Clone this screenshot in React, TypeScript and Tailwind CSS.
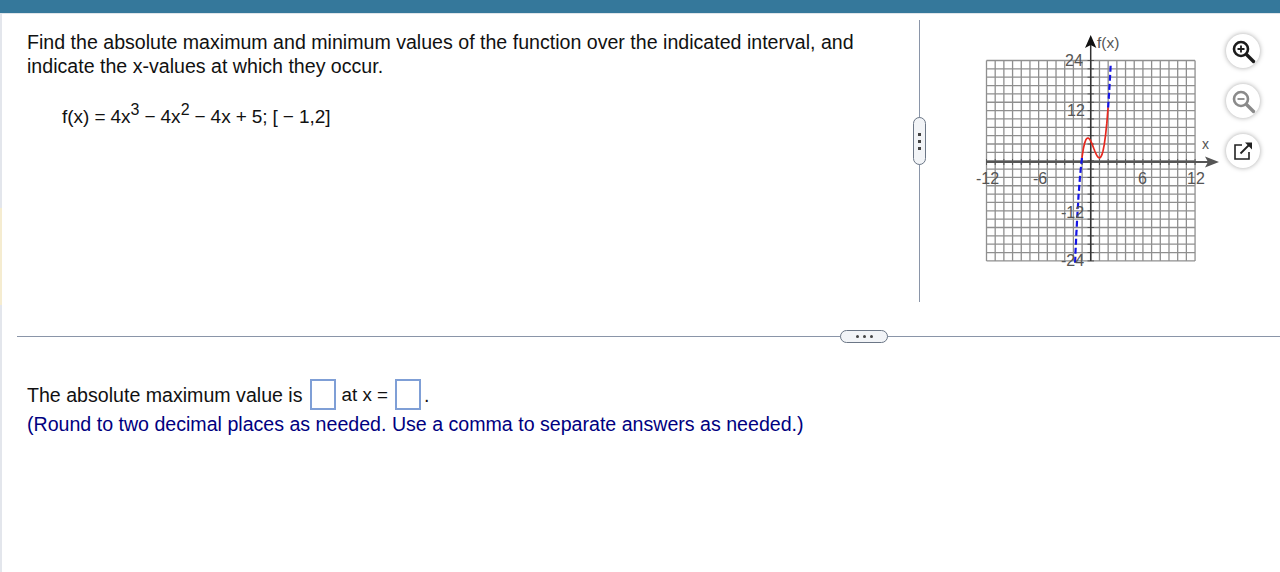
const xs = Array.from({ length: 25 }, (_, i) => i);
const ys = Array.from({ length: 25 }, (_, i) => i);

// graph coordinates, page offset is 970,30
const px = (x: number) => 120.7 + x * 8.69;
const py = (y: number) => 132 - y * 4.18;
const f = (x: number) => 4 * x ** 3 - 4 * x ** 2 - 4 * x + 5;

function curve(from: number, to: number) {
  const pts: string[] = [];
  for (let i = 0; i <= 60; i++) {
    const x = from + ((to - from) * i) / 60;
    pts.push(`${px(x).toFixed(1)},${py(f(x)).toFixed(1)}`);
  }
  return pts.join(' ');
}

function Graph() {
  return (
    <svg width="250" height="250" viewBox="0 0 250 250" className="block">
      {xs.map((i) => (
        <line key={i} x1={16.5 + i * 8.69} y1="30.5" x2={16.5 + i * 8.69} y2="231" stroke="#8f8f8f" strokeWidth="1.3" />
      ))}
      {ys.map((i) => (
        <line key={i} x1="16.5" y1={30.5 + i * 8.35} x2="225" y2={30.5 + i * 8.35} stroke="#8f8f8f" strokeWidth="1.3" />
      ))}
      {xs.map((i) => (
        <line key={i} x1={16.5 + i * 8.69} y1="129" x2={16.5 + i * 8.69} y2="135" stroke="#555" strokeWidth="1" />
      ))}
      {ys.map((i) => (
        <line key={i} x1="117.5" y1={30.5 + i * 8.35} x2="124" y2={30.5 + i * 8.35} stroke="#555" strokeWidth="1" />
      ))}
      <line x1="16.5" y1="132" x2="240" y2="132" stroke="#555" strokeWidth="1.8" />
      <line x1="120.7" y1="231" x2="120.7" y2="14" stroke="#333" strokeWidth="1.5" />
      <polygon points="120.7,5 115,18 120.7,15 126.4,18" fill="#111" />
      <polygon points="249,132 235,126.5 238,132 235,137.5" fill="#555" />
      <polyline points={curve(-1.8, -1)} fill="none" stroke="#1414e6" strokeWidth="2.2" strokeDasharray="6 3" />
      <polyline points={curve(2, 2.31)} fill="none" stroke="#1414e6" strokeWidth="2.2" strokeDasharray="6 3" />
      <polyline points={curve(-1, 2)} fill="none" stroke="#e8281e" strokeWidth="1.7" />
      <g fontFamily="'Liberation Sans', Arial, sans-serif" fontSize="16" fill="#555">
        <text x="127" y="18" fontSize="15.5">f(x)</text>
        <text x="232" y="119" fontSize="14">x</text>
        <text x="95" y="36">24</text>
        <text x="97" y="86">12</text>
        <text x="91" y="188">-12</text>
        <text x="91" y="236">-24</text>
        <text x="6" y="154">-12</text>
        <text x="63" y="154">-6</text>
        <text x="168" y="154">6</text>
        <text x="217" y="154">12</text>
      </g>
    </svg>
  );
}

function ToolButton({ children }: { children: React.ReactNode }) {
  return (
    <button className="flex h-[34px] w-[34px] items-center justify-center rounded-full bg-white shadow-[0_0_5px_rgba(0,0,0,0.35)]">
      {children}
    </button>
  );
}

function AnswerBox() {
  return <span className="ml-[7px] mr-[6px] inline-block h-[31px] w-[26px] border-2 border-[#7f9fd6] bg-white" />;
}

export default function App() {
  return (
    <div
      className="h-[572px] w-[1280px] overflow-hidden bg-white text-[19.6px] text-[#111]"
      style={{ fontFamily: "'Liberation Sans', Arial, sans-serif" }}
    >
      <div className="h-[13px] bg-[#35789b]" />
      <div className="h-px bg-[#dfe5ea]" />
      <div className="flex h-[558px]">
        {/* 左侧细条 */}
        <div className="flex w-[2px] flex-col">
          <div className="h-[194px] bg-[#e3e6ec]" />
          <div className="h-[97px] bg-[#f5ecd0]" />
          <div className="flex-1 bg-[#e3e6ec]" />
        </div>
        <div className="flex-1">
          {/* 题目区 */}
          <div className="flex h-[322px]">
            <div className="w-[917px] pl-[25px] pt-[16px]">
              <p className="leading-[24px]">
                Find the absolute maximum and minimum values of the function over the indicated interval, and
                <br />
                indicate the x-values at which they occur.
              </p>
              <p className="ml-[35px] mt-[25px] flex h-[26px] items-end text-[19px] leading-[24px] [word-spacing:-0.3px]">
                <span>f(x) = 4x</span>
                <span className="relative -top-[11px] text-[16px] leading-none">3</span>
                <span className="ml-[5px]">− 4x</span>
                <span className="relative -top-[11px] text-[16px] leading-none">2</span>
                <span className="ml-[5px]">− 4x + 5; [ − 1,2]</span>
              </p>
            </div>
            <div className="relative mt-[6px] h-[282px] w-px bg-[#8a95a8]">
              <div className="absolute left-[-6px] top-[97px] flex h-[48px] w-[13px] flex-col items-center justify-center gap-[4px] rounded-full border-[1.5px] border-[#6b7686] bg-[#f2f4f7]">
                <span className="h-[3px] w-[3px] bg-[#444]" />
                <span className="h-[3px] w-[3px] bg-[#444]" />
                <span className="h-[3px] w-[3px] bg-[#444]" />
              </div>
            </div>
            <div className="ml-[50px] mt-[16px]">
              <Graph />
            </div>
            <div className="ml-[6px] mt-[20px] flex flex-col gap-[16px]">
              <ToolButton>
                <svg width="28" height="28" viewBox="0 0 28 28" fill="none" stroke="#1c1c1c" strokeWidth="2.6">
                  <circle cx="12" cy="12" r="7" />
                  <line x1="17.5" y1="17.5" x2="24.5" y2="24.5" strokeWidth="3.4" strokeLinecap="round" />
                  <path d="M12 8.5v7M8.5 12h7" strokeWidth="1.8" />
                </svg>
              </ToolButton>
              <ToolButton>
                <svg width="28" height="28" viewBox="0 0 28 28" fill="none" stroke="#8a8a8a" strokeWidth="2.6">
                  <circle cx="12" cy="12" r="7" />
                  <line x1="17.5" y1="17.5" x2="24.5" y2="24.5" strokeWidth="3.4" strokeLinecap="round" />
                  <path d="M8.5 12h7" strokeWidth="1.8" />
                </svg>
              </ToolButton>
              <ToolButton>
                <svg width="22" height="22" viewBox="0 0 22 22" fill="none" stroke="#222" strokeWidth="1.6">
                  <path d="M10 5H3v14h14v-7" />
                  <path d="M8.5 13.5 18 4" strokeWidth="1.8" />
                  <polygon points="13,2.5 20,2.5 20,9.5" fill="#222" stroke="none" />
                </svg>
              </ToolButton>
            </div>
          </div>
          {/* 分隔线 */}
          <div className="relative ml-[15px] h-px bg-[#8a95a8]">
            <div className="absolute left-[823px] top-[-6px] flex h-[13px] w-[48px] items-center justify-center gap-[4px] rounded-full border-[1.5px] border-[#6b7686] bg-[#f2f4f7]">
              <span className="h-[3px] w-[3px] rounded-full bg-[#444]" />
              <span className="h-[3px] w-[3px] rounded-full bg-[#444]" />
              <span className="h-[3px] w-[3px] rounded-full bg-[#444]" />
            </div>
          </div>
          {/* 答题区 */}
          <div className="pl-[25px] pt-[42px]">
            <p className="flex h-[31px] items-center leading-[24px]">
              <span>The absolute maximum value is</span>
              <AnswerBox />
              <span className="text-[18.8px]">at x =</span>
              <AnswerBox />
              <span className="-ml-[3px]">.</span>
            </p>
            <p className="leading-[28px] text-[#000080]">
              (Round to two decimal places as needed. Use a comma to separate answers as needed.)
            </p>
          </div>
        </div>
      </div>
    </div>
  );
}
